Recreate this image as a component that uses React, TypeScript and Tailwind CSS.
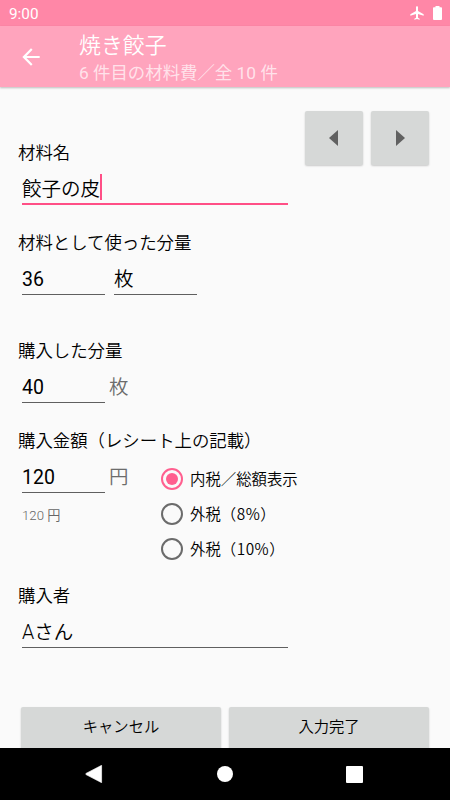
import { useState } from "react"
import type { ReactNode } from "react"
import clsx from "clsx"

const taxTypes = [
  { name: "内税／総額表示" },
  { name: "外税", rate: "8%" },
  { name: "外税", rate: "10%" },
]

function StatusBar() {
  return (
    <div className="flex h-[26px] shrink-0 items-center bg-[#ff87a7] pl-[9px] pr-[8px] text-white">
      <span className="pt-px text-[15.3px] font-normal leading-[26px]">9:00</span>
      <svg viewBox="0 0 24 24" className="ml-auto h-[16px] w-[16px]" fill="currentColor">
        <path d="M22 16v-2l-8.5-5V3.5C13.5 2.67 12.83 2 12 2s-1.5.67-1.5 1.5V9L2 14v2l8.5-2.5V19L8 20.5V22l4-1 4 1v-1.5L13.5 19v-5.5L22 16z" />
      </svg>
      <svg viewBox="0 0 9 14" className="ml-[8px] h-[14px] w-[9px]" fill="currentColor">
        <path d="M2.5 0h4v1.2h1.6a.9.9 0 0 1 .9.9v11a.9.9 0 0 1-.9.9H.9a.9.9 0 0 1-.9-.9v-11a.9.9 0 0 1 .9-.9h1.6z" />
      </svg>
    </div>
  )
}

function Toolbar() {
  return (
    <header className="z-10 flex h-[61px] shrink-0 bg-[#ffa4bd] text-white shadow-[0_1px_2px_rgba(0,0,0,0.25)]">
      <button className="flex w-[79px] items-center pl-[18px]" aria-label="戻る">
        <svg viewBox="0 0 24 24" className="h-[26px] w-[26px]" fill="currentColor">
          <path d="M20 11H7.83l5.59-5.59L12 4l-8 8 8 8 1.41-1.41L7.83 13H20v-2z" />
        </svg>
      </button>
      <div className="pt-[6px]">
        <h1 className="text-[21.9px] font-[350] leading-[28px]">焼き餃子</h1>
        <p className="pt-px text-[17.4px] font-normal leading-[24px] text-white/70">6 件目の材料費／全 10 件</p>
      </div>
    </header>
  )
}

function Field({ label, className, children }: { label: string; className?: string; children: ReactNode }) {
  return (
    <section className={className}>
      <h2 className="h-[26px] pl-[18px] text-[17.4px] font-[350] leading-[28px]">{label}</h2>
      <div className="flex items-start pl-[22px]">{children}</div>
    </section>
  )
}

interface InputProps {
  value: string
  className: string
  focused?: boolean
  numeric?: boolean
}

function Input({ value, className, focused, numeric }: InputProps) {
  return (
    <div
      className={clsx(
        "flex h-[40px] items-start border-b pt-[9px] text-[19.5px]",
        focused ? "border-b-2 border-[#ff4f86]" : "border-[#5f5f5f]",
        numeric && "font-normal",
        className,
      )}
    >
      <span className="pt-[2px] leading-[28px]">{value}</span>
      {focused && <span className="h-[26px] w-[2px] bg-[#ff4f86]" />}
    </div>
  )
}

function Unit({ children }: { children: ReactNode }) {
  return <span className="ml-[4px] pt-[12px] text-[19.5px] leading-[26px] text-[#6c6c6c]">{children}</span>
}

interface RadioProps {
  name: string
  rate?: string
  checked: boolean
  onClick: () => void
}

function Radio({ name, rate, checked, onClick }: RadioProps) {
  return (
    <button role="radio" aria-checked={checked} onClick={onClick} className="flex h-[35px] items-center">
      <span
        className={clsx(
          "flex h-[22px] w-[22px] items-center justify-center rounded-full border-2",
          checked ? "border-[#ff5f8f]" : "border-[#6b6b6b]",
        )}
      >
        {checked && <span className="h-[12px] w-[12px] rounded-full bg-[#ff5f8f]" />}
      </span>
      <span className="ml-[7px] whitespace-nowrap font-['Noto_Sans_CJK_JP',sans-serif] text-[15.4px]">
        {name}
        {rate && <span className="tracking-[0.5px]">（{rate}）</span>}
      </span>
    </button>
  )
}

const raised = "rounded-[2px] bg-[#d6d8d7] shadow-[0_1px_2px_rgba(0,0,0,0.2)]"

export default function App() {
  const [tax, setTax] = useState(0)

  return (
    <div className="flex h-[800px] w-[450px] flex-col overflow-hidden bg-[#fafafa] font-['Roboto','Noto_Sans_CJK_JP',sans-serif] font-[350] text-black">
      <StatusBar />
      <Toolbar />

      <main className="flex min-h-0 flex-1 flex-col overflow-hidden">
        <div className="flex h-[142px] shrink-0 pt-[24px]">
          <Field label="材料名" className="w-[305px] pt-[28px]">
            <Input value="餃子の皮" className="w-[266px]" focused />
          </Field>
          <div className="flex gap-[8px]">
            <button className={clsx(raised, "flex h-[54px] w-[58px] items-center justify-center")} aria-label="前へ">
              <svg viewBox="0 0 9 16" className="mr-[2px] h-[16px] w-[9px]" fill="#616161">
                <path d="M9 0v16L0 8z" />
              </svg>
            </button>
            <button className={clsx(raised, "flex h-[54px] w-[58px] items-center justify-center")} aria-label="次へ">
              <svg viewBox="0 0 9 16" className="h-[16px] w-[9px]" fill="#616161">
                <path d="M0 0v16l9-8z" />
              </svg>
            </button>
          </div>
        </div>

        <Field label="材料として使った分量" className="h-[108px] shrink-0">
          <Input value="36" className="w-[83px]" numeric />
          <Input value="枚" className="ml-[9px] w-[83px]" />
        </Field>

        <Field label="購入した分量" className="h-[90px] shrink-0">
          <Input value="40" className="w-[83px]" numeric />
          <Unit>枚</Unit>
        </Field>

        <Field label="購入金額（レシート上の記載）" className="h-[155px] shrink-0">
          <div className="w-[139px]">
            <div className="flex">
              <Input value="120" className="w-[83px]" numeric />
              <Unit>円</Unit>
            </div>
            <p className="pt-[13px] text-[13.2px] leading-[20px] text-[#666]">120 円</p>
          </div>
          <div role="radiogroup" className="flex flex-col pt-[8px]">
            {taxTypes.map((type, i) => (
              <Radio key={i} name={type.name} rate={type.rate} checked={tax === i} onClick={() => setTax(i)} />
            ))}
          </div>
        </Field>

        <Field label="購入者" className="h-[123px] shrink-0">
          <Input value="Aさん" className="w-[266px]" />
        </Field>

        <div className="flex shrink-0 gap-[8px] px-[21px] pt-[2px] text-[15.3px]">
          <button className={clsx(raised, "h-[44px] flex-1 pb-[4px]")}>キャンセル</button>
          <button className={clsx(raised, "h-[44px] flex-1 pb-[4px]")}>入力完了</button>
        </div>
      </main>

      <nav className="flex h-[52px] shrink-0 items-center justify-between bg-black pl-[85px] pr-[87px] text-white">
        <svg viewBox="0 0 18 18" className="h-[18px] w-[18px]" fill="currentColor">
          <path d="M16.6.3v17.4L1 9.6Q.2 9 1 8.4z" stroke="currentColor" strokeWidth=".6" strokeLinejoin="round" />
        </svg>
        <span className="h-[16px] w-[16px] rounded-full bg-white" />
        <span className="h-[17px] w-[17px] rounded-[1px] bg-white" />
      </nav>
    </div>
  )
}
